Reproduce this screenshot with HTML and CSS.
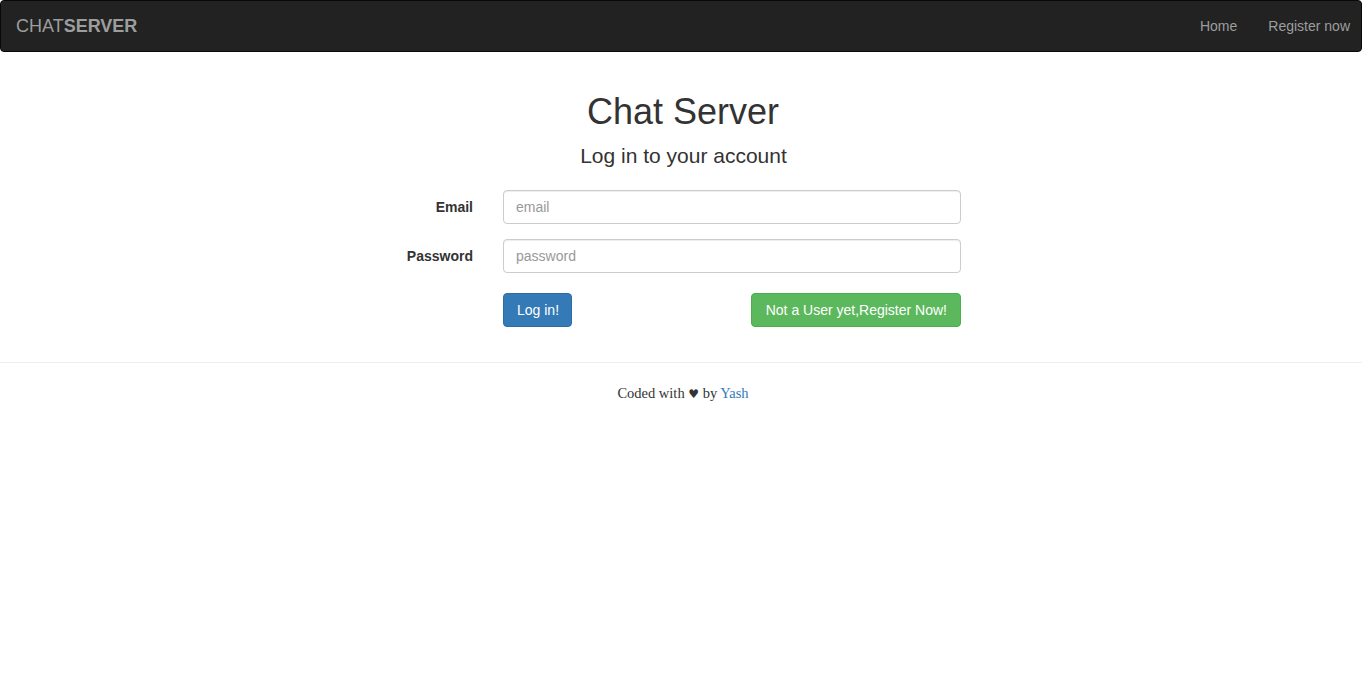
FILE: index.html
```html
<!DOCTYPE html>
<html>
<head>
<meta charset="utf-8">
<title>Chat Server</title>
<link rel="stylesheet" href="styles.css">
</head>
<body>
<nav class="navbar">
  <a class="brand" href="#">CHAT<b>SERVER</b></a>
  <ul class="nav">
    <li><a href="#">Home</a></li>
    <li><a href="#">Register now</a></li>
  </ul>
</nav>
<main class="main">
  <h1 class="title">Chat Server</h1>
  <h2 class="subtitle">Log in to your account</h2>
  <form class="form">
    <div class="row">
      <label class="label" for="email">Email</label>
      <div class="field"><input id="email" class="input" type="email" placeholder="email"></div>
    </div>
    <div class="row">
      <label class="label" for="password">Password</label>
      <div class="field"><input id="password" class="input" type="password" placeholder="password"></div>
    </div>
    <div class="row row-buttons">
      <div class="label"></div>
      <div class="field buttons">
        <button type="submit" class="btn btn-primary">Log in!</button>
        <button type="button" class="btn btn-success">Not a User yet,Register Now!</button>
      </div>
    </div>
  </form>
</main>
<hr class="rule">
<footer class="footer">Coded with <span class="heart">♥</span> by <a href="#">Yash</a></footer>
</body>
</html>
```
FILE: styles.css
```css
* { box-sizing: border-box; }
html, body { margin: 0; padding: 0; }
body {
  font-family: "Liberation Sans", Arial, sans-serif;
  font-size: 14px;
  line-height: 20px;
  color: #333;
  background: #fff;
}
.navbar {
  display: flex;
  justify-content: space-between;
  align-items: stretch;
  height: 52px;
  background: #222;
  border: 1px solid #080808;
  border-radius: 4px;
  padding: 0 11px 0 0;
}
.brand {
  display: block;
  padding: 15px 15px;
  font-size: 18px;
  line-height: 20px;
  color: #9d9d9d;
  text-decoration: none;
}
.brand b { font-weight: bold; }
.nav {
  display: flex;
  list-style: none;
  margin: 0;
  padding: 0;
}
.nav a {
  display: block;
  padding: 15px 15px;
  line-height: 20px;
  color: #9d9d9d;
  text-decoration: none;
}
.nav li:first-child a { padding-right: 16px; }
.nav li:last-child a { padding-right: 0; }
.main {
  width: 1170px;
  margin: 0 auto;
}
.title {
  margin: 40px 0 0;
  padding-left: 4px;
  font-size: 36px;
  font-weight: normal;
  line-height: 1.1;
  text-align: center;
  color: #333;
}
.subtitle {
  margin: 12px 0 0;
  padding-left: 5px;
  font-size: 21px;
  font-weight: normal;
  line-height: 1.1;
  text-align: center;
  color: #333;
}
.form { margin-top: 23px; }
.row {
  display: flex;
  margin-bottom: 15px;
}
.row-buttons { margin-top: 20px; margin-bottom: 0; }
.label {
  width: 392px;
  padding: 7px 15px 0;
  text-align: right;
  font-weight: bold;
}
.field {
  width: 488px;
  padding: 0 15px;
}
.input {
  display: block;
  width: 100%;
  height: 34px;
  padding: 6px 12px;
  font-family: inherit;
  font-size: 14px;
  line-height: 20px;
  color: #555;
  border: 1px solid #ccc;
  border-radius: 4px;
  box-shadow: inset 0 1px 1px rgba(0,0,0,.075);
}
.input::placeholder { color: #999; }
.buttons {
  display: flex;
  justify-content: space-between;
}
.btn {
  height: 34px;
  padding: 6px 12px;
  font-family: inherit;
  font-size: 14px;
  line-height: 20px;
  color: #fff;
  border: 1px solid transparent;
  border-radius: 4px;
}
.btn-primary { background: #337ab7; border-color: #2e6da4; padding: 6px 12px 6px 13px; }
.btn-success { background: #5cb85c; border-color: #4cae4c; padding: 6px 13px 6px 14px; }
.rule {
  margin: 35px 0 20px;
  border: 0;
  border-top: 1px solid #eee;
}
.footer {
  padding-left: 4px;
  font-family: "Liberation Serif", "Times New Roman", serif;
  font-size: 14.5px;
  line-height: 20px;
  text-align: center;
  color: #333;
}
.footer a { color: #337ab7; text-decoration: none; }
.heart { font-family: "DejaVu Sans", sans-serif; font-size: 12px; }
```
